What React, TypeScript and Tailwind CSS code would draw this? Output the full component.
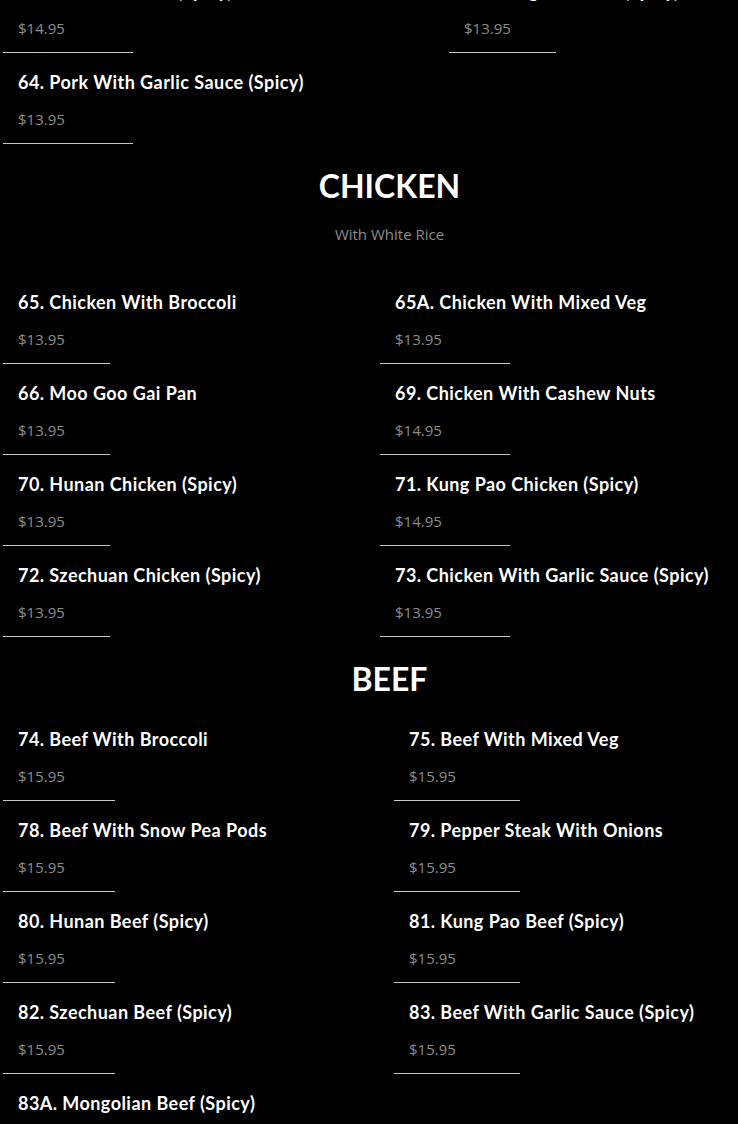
import React from "react";

type Item = { name: string; price: string };

interface Section {
    title?: string;
    subtitle?: string;
    cols: string; // grid template, written out in full
    leftLine: string;
    rightLine: string;
    gap: string;
    items: Item[];
}

const sections: Section[] = [
    {
        cols: "grid-cols-[446px_1fr]",
        leftLine: "w-[130px]",
        rightLine: "w-[107px]",
        gap: "",
        items: [
            { name: "62. Szechuan Pork (Spicy)", price: "$14.95" },
            { name: "63. Kung Pao Pork (Spicy)", price: "$13.95" },
            { name: "64. Pork With Garlic Sauce (Spicy)", price: "$13.95" },
        ],
    },
    {
        title: "CHICKEN",
        subtitle: "With White Rice",
        cols: "grid-cols-[377px_1fr]",
        leftLine: "w-[107px]",
        rightLine: "w-[130px]",
        gap: "mt-[29px]",
        items: [
            { name: "65. Chicken With Broccoli", price: "$13.95" },
            { name: "65A. Chicken With Mixed Veg", price: "$13.95" },
            { name: "66. Moo Goo Gai Pan", price: "$13.95" },
            { name: "69. Chicken With Cashew Nuts", price: "$14.95" },
            { name: "70. Hunan Chicken (Spicy)", price: "$13.95" },
            { name: "71. Kung Pao Chicken (Spicy)", price: "$14.95" },
            { name: "72. Szechuan Chicken (Spicy)", price: "$13.95" },
            { name: "73. Chicken With Garlic Sauce (Spicy)", price: "$13.95" },
        ],
    },
    {
        title: "BEEF",
        cols: "grid-cols-[391px_1fr]",
        leftLine: "w-[112px]",
        rightLine: "w-[126px]",
        gap: "mt-[11px]",
        items: [
            { name: "74. Beef With Broccoli", price: "$15.95" },
            { name: "75. Beef With Mixed Veg", price: "$15.95" },
            { name: "78. Beef With Snow Pea Pods", price: "$15.95" },
            { name: "79. Pepper Steak With Onions", price: "$15.95" },
            { name: "80. Hunan Beef (Spicy)", price: "$15.95" },
            { name: "81. Kung Pao Beef (Spicy)", price: "$15.95" },
            { name: "82. Szechuan Beef (Spicy)", price: "$15.95" },
            { name: "83. Beef With Garlic Sauce (Spicy)", price: "$15.95" },
            { name: "83A. Mongolian Beef (Spicy)", price: "$15.95" },
        ],
    },
];

const MenuItem = ({ item, line }: { item: Item; line: string }) => (
    <div className="pt-[17px]">
        <div className="pl-[15px] h-[24px] leading-[24px] text-[18px] tracking-[0.45px] font-bold text-white whitespace-nowrap font-['Lato',sans-serif]">
            {item.name}
        </div>
        <div className="pl-[15px] mt-[15px] h-[20px] leading-[20px] text-[15px] text-[#8c8c8c] font-['Open_Sans',sans-serif]">
            {item.price}
        </div>
        {/* divider width differs per column */}
        <div className={`mt-[14px] h-px bg-[#c8c8c8] ${line}`} />
    </div>
);

const MenuSection = ({ section }: { section: Section }) => (
    <div>
        {section.title && (
            <div className="mt-[22px]">
                <h2 className="pl-[41px] text-center h-[40px] leading-[40px] text-[32px] font-bold text-white font-['Lato',sans-serif]">
                    {section.title}
                </h2>
                {section.subtitle ? (
                    <p className="pl-[41px] mt-[18px] text-center h-[20px] leading-[20px] text-[15px] text-[#8c8c8c] font-['Open_Sans',sans-serif]">
                        {section.subtitle}
                    </p>
                ) : null}
            </div>
        )}
        <div className={`grid pl-[3px] ${section.cols} ${section.gap}`}>
            {section.items.map((item, i) => (
                <MenuItem key={item.name} item={item} line={i % 2 === 0 ? section.leftLine : section.rightLine} />
            ))}
        </div>
    </div>
);

export default function App() {
    return (
        <div className="min-h-screen bg-black overflow-hidden">
            <div className="-mt-[38px]">
                {sections.map((s, i) => (
                    <MenuSection key={i} section={s} />
                ))}
            </div>
        </div>
    );
}
